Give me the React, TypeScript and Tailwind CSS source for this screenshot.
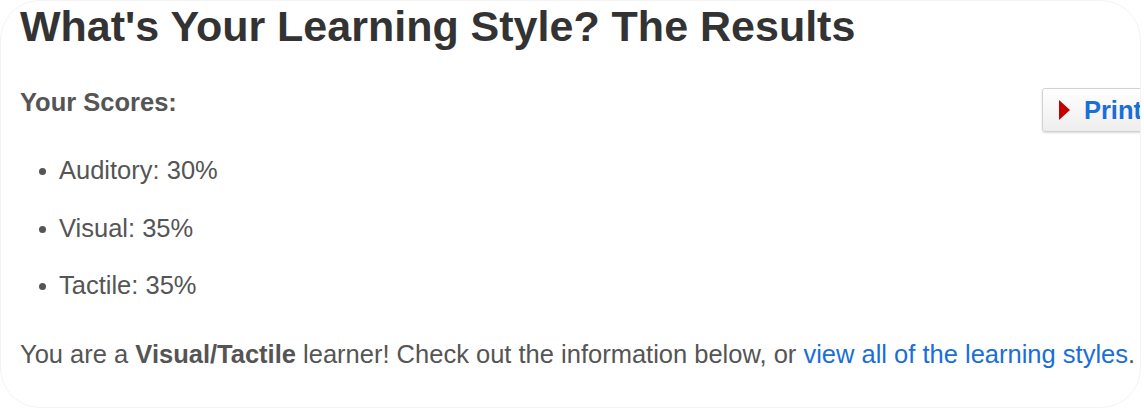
import React from 'react';

const scores = [
  { label: 'Auditory', value: 30 },
  { label: 'Visual', value: 35 },
  { label: 'Tactile', value: 35 },
];

function PrintButton() {
  return (
    <button className="ml-auto mr-[-36px] mt-[1px] h-[44px] shrink-0 flex items-center gap-[14px] pl-[16px] pr-[14px] rounded-[3px] border border-[#d2d2d2] bg-gradient-to-b from-white to-[#eeeeee] shadow-[0_1px_2px_rgba(0,0,0,0.15)]">
      <span className="w-0 h-0 border-y-[10px] border-y-transparent border-l-[11px] border-l-[#c40000]" />
      <span className="text-[25.5px] leading-[30px] font-bold text-[#1a6ed8]">Print</span>
    </button>
  );
}

export default function App() {
  return (
    <div className="w-[1144px] h-[410px] bg-white">
      <div className="w-[1141px] h-[408px] overflow-hidden rounded-[40px] border border-[#f3f3f3] bg-white px-[19px] font-['Liberation_Sans',Arial,sans-serif]">
        <h1 className="text-[43px] leading-[50px] font-bold text-[#333333]">
          What's Your Learning Style? The Results
        </h1>

        <div className="mt-[36px] flex items-start">
          <h2 className="text-[25.5px] leading-[30px] font-bold text-[#555555]">Your Scores:</h2>
          <PrintButton />
        </div>

        <ul className="mt-[23px] flex flex-col gap-[27.5px]">
          {scores.map((s) => (
            <li key={s.label} className="flex items-center text-[25.5px] leading-[30px] text-[#555555]">
              <span className="ml-[19px] mt-[3px] w-[7px] h-[7px] rounded-full bg-[#555555]" />
              <span className="ml-[13px]">
                {s.label}: {s.value}%
              </span>
            </li>
          ))}
        </ul>

        <p className="mt-[39px] text-[25.5px] leading-[30px] text-[#555555] whitespace-nowrap">
          You are a <b className="font-bold">Visual/Tactile</b> learner! Check out the information below, or{' '}
          <a className="text-[#1a6ed8]">view all of the learning styles</a>.
        </p>
      </div>
    </div>
  );
}
